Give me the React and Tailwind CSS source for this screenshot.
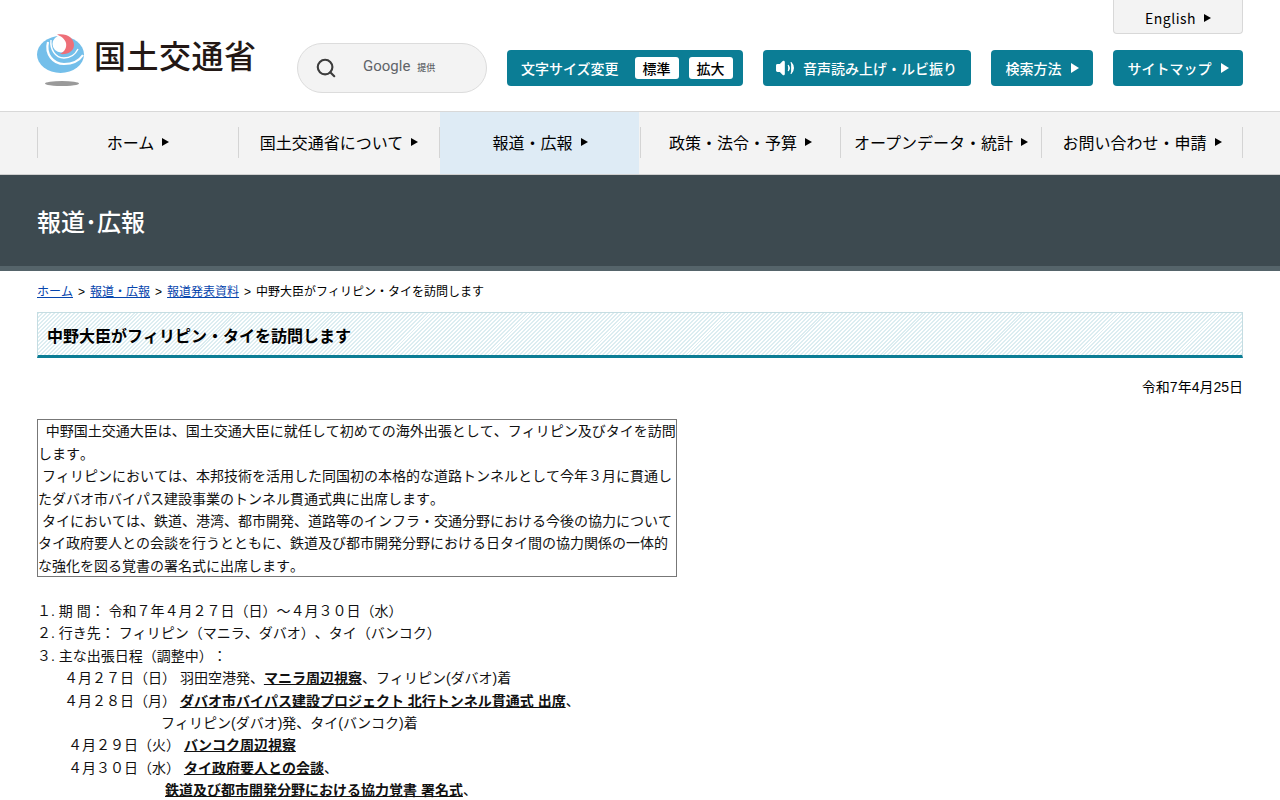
import { Search, Volume2 } from 'lucide-react';

const font = "font-['Noto_Sans_CJK_JP','Noto_Sans',sans-serif]";
const bodyFont = "font-['Liberation_Sans','Noto_Sans_CJK_JP',sans-serif] [font-kerning:none] [text-spacing-trim:space-all]";

const navItems = ['ホーム', '国土交通省について', '報道・広報', '政策・法令・予算', 'オープンデータ・統計', 'お問い合わせ・申請'];

const Arrow = ({ className = '' }) => (
  <span className={`inline-block w-0 h-0 border-y-[4px] border-y-transparent border-l-[7px] border-l-current ${className}`} />
);

const Logo = () => (
  <svg width="48" height="52" viewBox="0 0 48 52" className="shrink-0">
    <ellipse cx="23.5" cy="20.5" rx="23.5" ry="18.5" fill="#74bfea" />
    <path d="M11 8C8 20 16 30 27 30C35 30 42 27 46 21" fill="none" stroke="#fff" strokeWidth="2.2" />
    <path d="M14 6C13 15 18 24 27 24C33 24 38 21 41 15" fill="none" stroke="#fff" strokeWidth="1.4" />
    <circle cx="24" cy="10" r="8.5" fill="#fff" />
    <path d="M20 0.5C30 -1 37 4 37 11C37 17 31 21 23 20C27 18 30 14 29 9C28 5 24 2 20 0.5Z" fill="#ee6f78" />
    <ellipse cx="25" cy="49.5" rx="17" ry="2.6" fill="#9a9a9a" />
  </svg>
);

const TealButton = ({ className = '', children }) => (
  <div className={`h-9 rounded-[4px] bg-[#0b7d95] text-white text-[14px] font-medium flex items-center ${className}`}>
    {children}
  </div>
);

const Schedule = ({ className = '', children }) => <div className={className}>{children}</div>;

const Strong = ({ children }) => <strong className="underline font-bold">{children}</strong>;

const Sep = () => <span className="mx-[5px]">&gt;</span>;

export default function App() {
  return (
    <div className="h-[800px] overflow-hidden bg-white text-black">
      <header className={`relative h-[112px] border-b border-[#d8d8d8] px-[37px] flex items-start ${font}`}>
        <div className="flex items-center gap-[9px] mt-[34px] w-[260px]">
          <Logo />
          <span className="text-[32px] leading-none font-medium text-[#231815] -mt-[12px] tracking-[0.5px]">国土交通省</span>
        </div>
        <div className="mt-[43px] w-[190px] h-[50px] rounded-full border border-[#dcdcdc] bg-[#f3f3f3] flex items-center pl-[17px] text-[#5f6368]">
          <Search size={22} strokeWidth={2.3} className="text-[#3c3c3c]" />
          <span className="ml-[26px] -mt-[3px] text-[15px] font-['Roboto',sans-serif]">Google</span>
          <span className="ml-[7px] text-[9px] font-medium">提供</span>
        </div>
        <div className="ml-auto flex flex-col items-end">
          <div className="w-[130px] h-[34px] pt-[3px] rounded-b-[4px] border border-t-0 border-[#d8d8d8] bg-[#f3f3f3] flex items-center justify-center gap-2 text-[14px] tracking-[0.5px]">
            English <Arrow />
          </div>
          <div className="mt-4 flex gap-5">
            <TealButton className="w-[236px] pl-[14px]">
              <span>文字サイズ変更</span>
              <span className="ml-[16px] w-[44px] h-[22px] rounded-[3px] bg-white text-black text-[14px] flex items-center justify-center">標準</span>
              <span className="ml-[10px] w-[44px] h-[22px] rounded-[3px] bg-white text-black text-[14px] flex items-center justify-center">拡大</span>
            </TealButton>
            <TealButton className="w-[208px] pl-[12px]">
              <Volume2 size={20} fill="white" strokeWidth={1.5} />
              <span className="ml-[8px]">音声読み上げ・ルビ振り</span>
            </TealButton>
            <TealButton className="w-[102px] justify-center gap-[9px]">
              検索方法 <Arrow className="border-y-[5px] border-l-[8px]" />
            </TealButton>
            <TealButton className="w-[130px] justify-center gap-[9px]">
              サイトマップ <Arrow className="border-y-[5px] border-l-[8px]" />
            </TealButton>
          </div>
        </div>
      </header>

      <nav className={`h-[63px] bg-[#f3f3f3] border-b border-[#d0d0d0] px-[37px] ${font}`}>
        <ul className="grid grid-cols-[201px_201px_201px_200px_201px_202px] h-full pb-[2px]">
          {navItems.map((item, i) => (
            <li key={item} className={`flex items-center justify-center -mb-[2px] pb-[2px] ${i === 2 ? 'bg-[linear-gradient(#deebf5,#deebf5)] bg-[length:199px_100%] bg-center bg-no-repeat' : ''}`}>
              <div className={`w-full h-[31px] border-l border-[#d4d4d4] flex items-center justify-center gap-[8px] text-[16px] ${i === 5 ? 'border-r' : ''}`}>
                {item} <Arrow />
              </div>
            </li>
          ))}
        </ul>
      </nav>

      <div className={`h-[96px] bg-[#3d4a50] border-b-[5px] border-[#55646a] px-[37px] flex items-center ${font}`}>
        <h2 className="text-[24px] font-medium text-white">報道･広報</h2>
      </div>

      <main className={`px-[37px] ${bodyFont}`}>
        <div className="pt-[13px] text-[12px] leading-[16px]">
          <a className="underline text-[#0645ad]">ホーム</a><Sep /><a className="underline text-[#0645ad]">報道・広報</a><Sep /><a className="underline text-[#0645ad]">報道発表資料</a><Sep />中野大臣がフィリピン・タイを訪問します
        </div>
        <h1 className="mt-[12px] h-[46px] flex items-center pl-[9px] pt-[6px] border border-b-[3px] border-[#c5dde2] border-b-[#0b7d95] text-[16px] font-bold bg-[repeating-linear-gradient(135deg,#dcedf1_0,#dcedf1_1.4px,#fff_1.4px,#fff_2.8px)]">
          中野大臣がフィリピン・タイを訪問します
        </h1>
        <p className="mt-[18px] text-right text-[14px] leading-[22.4px]">令和7年4月25日</p>

        <div className="mt-[21px] w-[640px] h-[158px] border border-[#777] text-[14px] leading-[22.4px] text-[#111]">
          <p>&nbsp;&nbsp;中野国土交通大臣は、国土交通大臣に就任して初めての海外出張として、フィリピン及びタイを訪問します。</p>
          <p>&nbsp;フィリピンにおいては、本邦技術を活用した同国初の本格的な道路トンネルとして今年３月に貫通したダバオ市バイパス建設事業のトンネル貫通式典に出席します。</p>
          <p>&nbsp;タイにおいては、鉄道、港湾、都市開発、道路等のインフラ・交通分野における今後の協力についてタイ政府要人との会談を行うとともに、鉄道及び都市開発分野における日タイ間の協力関係の一体的な強化を図る覚書の署名式に出席します。</p>
        </div>

        <div className="mt-[22.6px] text-[14px] leading-[22.4px] text-[#111]">
          <p>１. 期 間： 令和７年４月２７日（日）～４月３０日（水）</p>
          <p>２. 行き先： フィリピン（マニラ、ダバオ）、タイ（バンコク）</p>
          <p>３. 主な出張日程（調整中）：</p>
          <Schedule className="pl-[27px]">４月２７日（日） 羽田空港発、<Strong>マニラ周辺視察</Strong>、フィリピン(ダバオ)着</Schedule>
          <Schedule className="pl-[27px]">４月２８日（月） <Strong>ダバオ市バイパス建設プロジェクト 北行トンネル貫通式 出席</Strong>、</Schedule>
          <Schedule className="pl-[124px]">フィリピン(ダバオ)発、タイ(バンコク)着</Schedule>
          <Schedule className="pl-[31px]">４月２９日（火） <Strong>バンコク周辺視察</Strong></Schedule>
          <Schedule className="pl-[31px]">４月３０日（水） <Strong>タイ政府要人との会談</Strong>、</Schedule>
          <Schedule className="pl-[128px]"><Strong>鉄道及び都市開発分野における協力覚書 署名式</Strong>、</Schedule>
        </div>
      </main>
    </div>
  );
}
